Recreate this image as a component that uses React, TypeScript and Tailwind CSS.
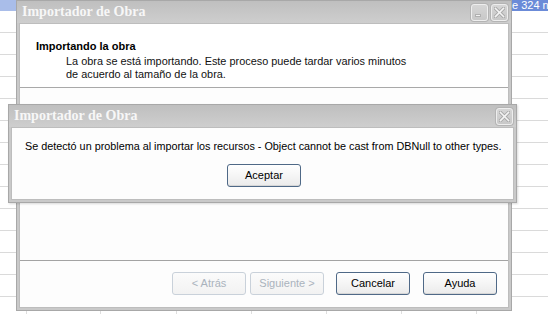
import React from 'react';

const cols = [27, 74, 76, 75, 75, 75, 75, 75];

function CloseGlyph() {
  return (
    <svg width="11" height="11" viewBox="0 0 11 11">
      <path d="M1.5 1.5 L9.5 9.5 M9.5 1.5 L1.5 9.5" stroke="#a9a9a9" strokeWidth="3.4" strokeLinecap="square" />
      <path d="M1.5 1.5 L9.5 9.5 M9.5 1.5 L1.5 9.5" stroke="#f4f4f4" strokeWidth="1.6" strokeLinecap="square" />
    </svg>
  );
}

function TitleButton({ kind }: { kind: 'min' | 'close' }) {
  return (
    <div className="w-[17px] h-[17px] rounded-[3px] border border-[#eeeeee] bg-gradient-to-b from-[#d6d6d6] to-[#c8c8c8] flex items-center justify-center shadow-[0_0_0_1px_#b4b4b4]">
      {kind === 'close' ? (
        <CloseGlyph />
      ) : (
        <div className="w-[6px] h-[3px] bg-[#f2f2f2] border border-[#b0b0b0] self-end mb-[3px] mr-[4px]" />
      )}
    </div>
  );
}

function XpButton({ label, disabled }: { label: string; disabled?: boolean }) {
  return (
    <div
      className={`h-[23px] w-[74px] rounded-[3px] border flex items-center justify-center text-[11px] bg-gradient-to-b ${
        disabled
          ? 'border-[#c9d1da] text-[#aab3bd] from-[#fbfbfb] to-[#f2f2f2]'
          : 'border-[#4f6987] text-black from-[#ffffff] to-[#ebebeb] shadow-[inset_0_-1px_0_#d6d6d6]'
      }`}
    >
      {label}
    </div>
  );
}

export default function App() {
  return (
    <div className="relative w-[548px] h-[314px] overflow-hidden bg-white" style={{ fontFamily: '"Liberation Sans", Arial, sans-serif' }}>
      {/* hoja de fondo */}
      <div className="flex flex-col">
        <div className="h-[11px] flex">
          <div className="w-[16px] bg-[#a9bde9]" />
          <div className="flex-1" />
          <div className="w-[37px] bg-[#6b8bd8] text-white text-[11px] leading-[11px] overflow-hidden whitespace-nowrap pl-[1px]">e 324 n</div>
        </div>
        {Array.from({ length: 14 }).map((_, r) => (
          <div key={r} className="h-[22px] flex border-b border-[#dadada] shrink-0">
            {cols.map((w, c) => (
              <div key={c} className="h-full border-r border-[#dedede] shrink-0" style={{ width: w }} />
            ))}
          </div>
        ))}
      </div>

      {/* ventana principal */}
      <div className="absolute left-[16px] top-0 w-[496px] h-[311px] flex flex-col bg-[#c9c9c9] border border-[#a8a8a8] px-[2px] pb-[2px]">
        <div className="h-[22px] shrink-0 flex items-center justify-between bg-gradient-to-b from-[#bfbfbf] to-[#cecece] -mx-[2px] px-[5px]">
          <span className="text-[#f7f7f7] font-bold text-[14px] leading-none" style={{ fontFamily: '"Liberation Serif", serif' }}>Importador de Obra</span>
          <div className="flex gap-[3px] mr-[-2px]">
            <TitleButton kind="min" />
            <TitleButton kind="close" />
          </div>
        </div>
        <div className="flex-1 flex flex-col bg-[#fdfdfd] border border-[#bdbdbd]">
          <div className="h-[64px] bg-white border-b border-[#a9a9a9] pl-[16px] pt-[16px] text-[11px] leading-[13px] text-black">
            <div className="font-bold">Importando la obra</div>
            <div className="pl-[30px] pt-[2px] text-[#111] text-[10.9px]">
              La obra se está importando. Este proceso puede tardar varios minutos
              <br />
              de acuerdo al tamaño de la obra.
            </div>
          </div>
          <div className="flex-1 border-b border-[#a3a3a3]" />
          <div className="h-[46px] flex items-start justify-end pt-[11px] pr-[11px]">
            <XpButton label="< Atrás" disabled />
            <div className="w-[4px]" />
            <XpButton label="Siguiente >" disabled />
            <div className="w-[12px]" />
            <XpButton label="Cancelar" />
            <div className="w-[13px]" />
            <XpButton label="Ayuda" />
          </div>
        </div>
      </div>

      {/* mensaje de error */}
      <div className="absolute left-[8px] top-[104px] w-[509px] h-[99px] flex flex-col bg-[#c9c9c9] border border-[#a8a8a8] px-[2px] pb-[2px] shadow-[1px_1px_2px_rgba(0,0,0,0.15)]">
        <div className="h-[22px] shrink-0 flex items-center justify-between bg-gradient-to-b from-[#bfbfbf] to-[#cecece] -mx-[2px] px-[5px]">
          <span className="text-[#f7f7f7] font-bold text-[14px] leading-none" style={{ fontFamily: '"Liberation Serif", serif' }}>Importador de Obra</span>
          <div className="mr-[-2px]">
            <TitleButton kind="close" />
          </div>
        </div>
        <div className="flex-1 flex flex-col items-center bg-[#fdfdfd] border border-[#bdbdbd]">
          <div className="self-start pl-[13px] pt-[12px] text-[10.8px] leading-[13px] text-black whitespace-nowrap">
            Se detectó un problema al importar los recursos - Object cannot be cast from DBNull to other types.
          </div>
          <div className="mt-[11px] ml-[3px]">
            <XpButton label="Aceptar" />
          </div>
        </div>
      </div>
    </div>
  );
}
